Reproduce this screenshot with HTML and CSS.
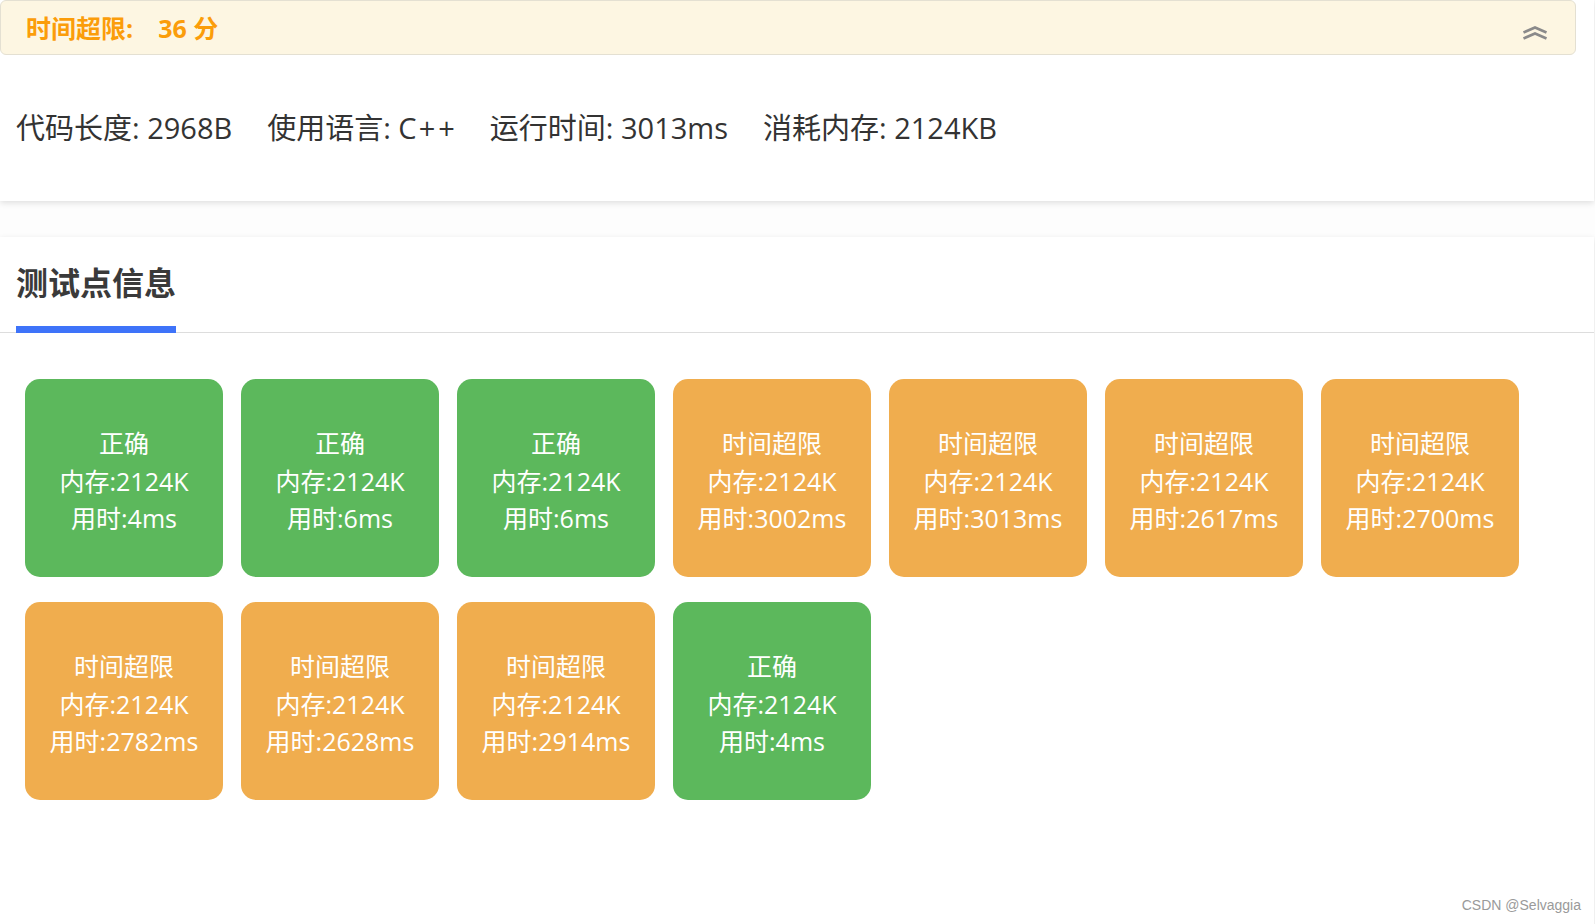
FILE: index.html
```html
<!DOCTYPE html>
<html lang="zh-CN">
<head>
<meta charset="utf-8">
<title>评测结果</title>
<link rel="stylesheet" href="styles.css">
</head>
<body>
<div class="page">
  <section class="panel summary">
    <div class="status-bar">
      <span class="status-text">时间超限:<span class="score">36 分</span></span>
      <svg class="collapse" width="26" height="14" viewBox="0 0 26 14">
        <polyline points="1.5,6.5 13,1.5 24.5,6.5" fill="none" stroke="#8a8a8a" stroke-width="2.6"/>
        <polyline points="1.5,12.5 13,7.5 24.5,12.5" fill="none" stroke="#8a8a8a" stroke-width="2.6"/>
      </svg>
    </div>
    <div class="stats">
      <span class="stat">代码长度: 2968B</span>
      <span class="stat">使用语言: C<span class="plus">+</span>+</span>
      <span class="stat">运行时间: 3013ms</span>
      <span class="stat">消耗内存: 2124KB</span>
    </div>
  </section>

  <section class="panel tests">
    <div class="tabs">
      <div class="tab">测试点信息</div>
    </div>
    <div class="cards">
      <div class="card ok"><span>正确</span><span>内存:2124K</span><span>用时:4ms</span></div>
      <div class="card ok"><span>正确</span><span>内存:2124K</span><span>用时:6ms</span></div>
      <div class="card ok"><span>正确</span><span>内存:2124K</span><span>用时:6ms</span></div>
      <div class="card tle"><span>时间超限</span><span>内存:2124K</span><span>用时:3002ms</span></div>
      <div class="card tle"><span>时间超限</span><span>内存:2124K</span><span>用时:3013ms</span></div>
      <div class="card tle"><span>时间超限</span><span>内存:2124K</span><span>用时:2617ms</span></div>
      <div class="card tle"><span>时间超限</span><span>内存:2124K</span><span>用时:2700ms</span></div>
      <div class="card tle"><span>时间超限</span><span>内存:2124K</span><span>用时:2782ms</span></div>
      <div class="card tle"><span>时间超限</span><span>内存:2124K</span><span>用时:2628ms</span></div>
      <div class="card tle"><span>时间超限</span><span>内存:2124K</span><span>用时:2914ms</span></div>
      <div class="card ok"><span>正确</span><span>内存:2124K</span><span>用时:4ms</span></div>
    </div>
  </section>
  <div class="watermark">CSDN @Selvaggia</div>
</div>
</body>
</html>
```
FILE: styles.css
```css
html, body {
  margin: 0;
  padding: 0;
}
body {
  background: #fdfdfd;
  font-family: "Open Sans", "Noto Sans CJK SC", sans-serif;
  color: #333;
  overflow: hidden;
}
.page {
  position: relative;
  width: 1595px;
  height: 924px;
}
.panel {
  width: 1594px;
  background: #fff;
  box-shadow: 0 2px 6px rgba(0, 0, 0, 0.12);
}
.summary {
  height: 201px;
  display: flex;
  flex-direction: column;
}
.status-bar {
  box-sizing: border-box;
  width: 1576px;
  height: 55px;
  background: #fdf6e2;
  border: 1px solid #e4e0d2;
  border-radius: 6px;
  display: flex;
  align-items: center;
  justify-content: space-between;
  padding: 0 27px 0 25px;
}
.status-text {
  color: #fb9d0a;
  font-weight: 700;
  font-size: 25px;
  line-height: 30px;
}
.score {
  margin-left: 25px;
}
.collapse {
  display: block;
  margin-top: 10px;
}
.stats {
  margin-top: 53px;
  padding-left: 16px;
  display: flex;
  gap: 35px;
  font-size: 29px;
  line-height: 40px;
  color: #333;
}
.plus {
  letter-spacing: 3px;
  margin-left: 2px;
}
.tests {
  margin-top: 36px;
  height: 700px;
}
.tabs {
  display: flex;
  padding-left: 16px;
  border-bottom: 1px solid #dddddd;
}
.tab {
  font-size: 32px;
  font-weight: 700;
  line-height: 44px;
  color: #3a3a3a;
  padding-top: 24px;
  padding-bottom: 21px;
  border-bottom: 7px solid #3e73f9;
  margin-bottom: -1px;
}
.cards {
  display: flex;
  flex-wrap: wrap;
  column-gap: 18px;
  row-gap: 25px;
  padding: 46px 0 0 25px;
  width: 1540px;
}
.card {
  width: 198px;
  height: 198px;
  border-radius: 15px;
  color: #fff;
  display: flex;
  flex-direction: column;
  align-items: center;
  justify-content: center;
  font-size: 25px;
  line-height: 37.5px;
  padding-top: 7px;
  box-sizing: border-box;
}
.ok {
  background: #5cb85c;
}
.tle {
  background: #f0ad4e;
}
.watermark {
  position: absolute;
  right: 14px;
  top: 897px;
  font-family: "Liberation Sans", sans-serif;
  font-size: 14px;
  color: #9a9a9a;
}
```
